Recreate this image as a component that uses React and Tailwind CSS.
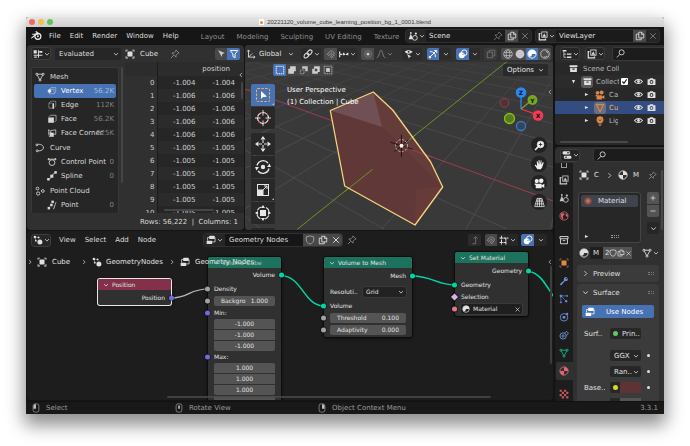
import React from "react";

const ICONS = {
  blender: (
    <g fill="none" stroke="currentColor" strokeWidth="1.7" strokeLinecap="round">
      <path d="M1 11.5 9 5.2M2.5 6.2h7M7.5 2.5l4.2 3.3" />
      <circle cx="10" cy="9.2" r="4.4" />
      <circle cx="10" cy="9.2" r="1.4" fill="currentColor" stroke="none" />
    </g>
  ),
  sheet: <path d="M1 2h5v5H1zM8 2h1.500v12H8zM1 9h14v1.6H1zM10 3h5v3h-5zM2 12h4v2H2z" fill="currentColor" />,
  object: (
    <g fill="currentColor">
      <rect x="4" y="4" width="8" height="8" rx="0.8" />
      <path d="M1 1h3.500v1.300h-2.200v2.200H1zM15 1h-3.500v1.300h2.200v2.200H15zM1 15h3.500v-1.300h-2.200v-2.200H1zM15 15h-3.500v-1.300h2.200v-2.200H15z" />
    </g>
  ),
  pin: (
    <g fill="none" stroke="currentColor" strokeWidth="1.2" strokeLinejoin="round">
      <path d="M9.5 1.5 14.5 6.5 12.5 7 9.8 9.8 9.5 13 3 6.5 6.3 6.2 9 3.5zM6 10 1.5 14.5" />
    </g>
  ),
  cursor: <path d="M2 2 14 7 9.5 8.8 8.5 14z" fill="currentColor" />,
  funnel: (
    <path d="M2 2.5h12L9.7 8v6L6.3 12V8z" fill="none" stroke="currentColor" strokeWidth="1.5" strokeLinejoin="round" />
  ),
  mesh: (
    <g fill="none" stroke="currentColor" strokeWidth="1.4">
      <path d="M3 3.5h10L8 13z" />
      <g fill="#262626">
        <circle cx="3" cy="3.5" r="1.6" />
        <circle cx="13" cy="3.5" r="1.6" />
        <circle cx="8" cy="13" r="1.6" />
      </g>
    </g>
  ),
  vertex: (
    <g fill="none" stroke="currentColor" strokeWidth="1" opacity="0.9">
      <path d="M4 5V12.5h7.5l2.5-2.5V2.5H6.5L4 5h7.5v7.5" opacity="0.6" />
      <circle cx="4" cy="8" r="2.4" fill="currentColor" />
    </g>
  ),
  edge: (
    <g fill="none" stroke="currentColor" strokeWidth="1">
      <path d="M3 5v8h6M3 5l3-3h8v8l-2 2M3 5h5" opacity="0.7" />
      <path d="M10 5v9" strokeWidth="2.6" />
    </g>
  ),
  face: (
    <g>
      <rect x="2" y="5.5" width="9" height="8.5" fill="currentColor" />
      <path d="M3 4.5 5.5 2H14.500v8.500L12 13" fill="none" stroke="currentColor" strokeWidth="1" />
    </g>
  ),
  corner: (
    <g fill="none" stroke="currentColor" strokeWidth="1.2">
      <path d="M3 2v10M6 4l8-1v7H6z" />
      <path d="M3 13.500h8" />
      <rect x="5" y="8" width="5" height="4.500" fill="currentColor" />
      <path d="M2 4h2M2 8h2" />
    </g>
  ),
  curve: (
    <g fill="none" stroke="currentColor" strokeWidth="1.4">
      <path d="M3 2.500C9 1 14 4 13.500 8S8 13 4 12.500" />
      <circle cx="3" cy="3" r="1.500" fill="#262626" />
      <circle cx="3.500" cy="12.500" r="1.500" fill="#262626" />
    </g>
  ),
  control: (
    <g fill="none" stroke="currentColor" strokeWidth="1.4">
      <circle cx="8" cy="9" r="4.600" />
      <path d="M3 3.500h10" />
      <circle cx="2.500" cy="3.500" r="1" fill="currentColor" />
      <circle cx="13.500" cy="3.500" r="1" fill="currentColor" />
    </g>
  ),
  spline: (
    <g fill="none" stroke="currentColor" strokeWidth="1.300">
      <path d="M2 14C7 13 8 4 14 2" />
      <rect x="6" y="6.500" width="3.500" height="3.500" fill="currentColor" />
      <rect x="1" y="12" width="2.500" height="2.500" fill="currentColor" />
      <rect x="12.500" y="1" width="2.500" height="2.500" fill="currentColor" />
    </g>
  ),
  cloud: (
    <g fill="none" stroke="currentColor" strokeWidth="1.400">
      <circle cx="4" cy="4" r="2.200" />
      <circle cx="5" cy="12" r="2.600" />
      <circle cx="12.500" cy="8" r="2.200" />
    </g>
  ),
  point: (
    <g fill="currentColor">
      <rect x="7" y="1" width="4" height="4" />
      <rect x="5" y="6" width="4" height="4" />
      <rect x="1" y="11" width="4" height="4" />
      <path d="M11 15 15 3h-1L10 14z" />
    </g>
  ),
  axes: (
    <g fill="none" stroke="currentColor" strokeWidth="1.400">
      <path d="M4 13V2M4 13h10M4 13l6-6M2 4l2-2.500L6 4M12 11l2.500 2L12 15" />
    </g>
  ),
  link: (
    <g fill="none" stroke="currentColor" strokeWidth="1.700" strokeLinecap="round">
      <ellipse cx="10.500" cy="5.500" rx="4.500" ry="3" transform="rotate(-45 10.500 5.500)" />
      <ellipse cx="5.500" cy="10.500" rx="4.500" ry="3" transform="rotate(-45 5.500 10.500)" />
    </g>
  ),
  magnet: (
    <path
      d="M2 8.500 5.500 4.500C9 1 15 5 12.500 9.500L9.500 14M4.500 10.500 7.500 7c1.500-1 3 0 2.300 1.500L7 12M2 8.500l2.500 2M9.500 14 7 12"
      fill="none"
      stroke="currentColor"
      strokeWidth="1.300"
    />
  ),
  snap: <path d="M1 4v9M1 8.500h13M7.500 6v5M14 6v5" fill="none" stroke="currentColor" strokeWidth="2" strokeDasharray="4 1" />,
  grid: <path d="M4 1v14M11 4v11M1 5h14M1 12h12" fill="none" stroke="currentColor" strokeWidth="1.700" strokeDasharray="5 1" />,
  prop: (
    <g>
      <circle cx="8" cy="8" r="5.500" fill="none" stroke="currentColor" strokeWidth="1" opacity="0.500" />
      <circle cx="8" cy="8" r="2.500" fill="currentColor" />
    </g>
  ),
  bell: <path d="M1 14C6 13 5 2 8 2s2 11 7 12" fill="none" stroke="currentColor" strokeWidth="1.400" />,
  eyeCursor: (
    <g>
      <path d="M1 4.500C4 1 10 1 14 4.500 10 8.500 4 8.500 1 4.500z" fill="currentColor" />
      <circle cx="7.500" cy="4.500" r="1.500" fill="#222" />
      <path d="M5 8l7 4-3 .5L8 15.500z" fill="currentColor" />
    </g>
  ),
  gizmo: (
    <g fill="none" stroke="currentColor" strokeWidth="1.500">
      <path d="M3 4C9 4 12 7 12 13M3 13 13 3M10 2.500h4v4" />
      <circle cx="3" cy="13" r="1.300" fill="currentColor" />
    </g>
  ),
  overlay: (
    <g>
      <circle cx="10" cy="6" r="4.500" fill="none" stroke="currentColor" strokeWidth="1.500" />
      <circle cx="6" cy="10" r="4.800" fill="currentColor" />
      <path d="M7 9.500a4 4 0 0 1 3-2" stroke="#4570b5" fill="none" />
    </g>
  ),
  xray: (
    <g fill="none" stroke="currentColor" strokeWidth="1.300">
      <rect x="2" y="5" width="8.500" height="9" />
      <path d="M5 5V2h9v9h-3.500" />
    </g>
  ),
  wire: (
    <g fill="none" stroke="currentColor" strokeWidth="1.100">
      <circle cx="8" cy="8" r="6.800" />
      <ellipse cx="8" cy="8" rx="3" ry="6.800" />
      <path d="M1.500 5.500h13M1.500 10.500h13" />
    </g>
  ),
  solid: <circle cx="8" cy="8" r="7" fill="currentColor" />,
  material: (
    <g>
      <circle cx="8" cy="8" r="6.600" fill="none" stroke="currentColor" strokeWidth="1.400" />
      <path d="M8 1.400V8h6.600A6.600 6.600 0 0 0 8 1.400zM8 8H1.400A6.600 6.600 0 0 0 8 14.600z" fill="currentColor" />
    </g>
  ),
  shade: (
    <g>
      <circle cx="8" cy="8" r="6.600" fill="none" stroke="currentColor" strokeWidth="1.400" />
      <path d="M8 1.500A6.500 6.500 0 0 0 3 12C6 13 8 11 8 8h6.500A6.500 6.500 0 0 0 8 1.500z" fill="currentColor" />
    </g>
  ),
  rendered: (
    <g fill="none" stroke="currentColor" strokeWidth="1.300">
      <circle cx="8" cy="8" r="6.800" />
      <path d="M9 3.500A4 4 0 0 1 12.500 7M12 11.500a6 6 0 0 1-6 1" />
    </g>
  ),
  selNew: (
    <rect x="2" y="2" width="12" height="12" fill="none" stroke="currentColor" strokeWidth="1.500" strokeDasharray="2.200 1.100" />
  ),
  selAdd: <path d="M5 2h9v8h-3v4H2V6h3z" fill="currentColor" />,
  selSub: (
    <g>
      <path d="M5 2h9v8h-4V6H5z" fill="currentColor" opacity="0.900" />
      <rect x="2" y="8" width="6" height="6" fill="none" stroke="currentColor" strokeDasharray="2 1" />
    </g>
  ),
  selXor: <path d="M5 2h9v9h-3v3H2V6h3zM6 6v4h4V6z" fill="currentColor" fillRule="evenodd" />,
  selAnd: (
    <g>
      <rect x="5" y="5" width="6" height="6" fill="currentColor" />
      <rect x="2" y="2" width="12" height="12" fill="none" stroke="currentColor" strokeWidth="1.200" strokeDasharray="2 1.300" />
    </g>
  ),
  toolSelect: (
    <g>
      <rect x="1.500" y="1.500" width="13" height="13" rx="1" fill="none" stroke="#f0b347" strokeWidth="1" strokeDasharray="2.500 1.300" />
      <path d="M6 4v8l2-2 1.200 0 2.800-.5z" fill="#fff" />
    </g>
  ),
  toolCursor: (
    <g fill="none">
      <circle cx="8" cy="8" r="5.500" stroke="#eee" strokeWidth="1.200" />
      <circle cx="8" cy="8" r="5.500" stroke="#d44" strokeWidth="1.200" strokeDasharray="2 3.760" />
      <path d="M8 0v5.500M8 10.500V16M0 8h5.500M10.500 8H16" stroke="#eee" strokeWidth="0.900" />
    </g>
  ),
  toolMove: (
    <g fill="currentColor">
      <path d="M8 0l2.500 3.500h-5zM8 16l2.500-3.500h-5zM0 8l3.500-2.500v5zM16 8l-3.500-2.500v5z" />
      <path d="M8 4v3M8 9v3M4 8h3M9 8h3" stroke="currentColor" strokeWidth="1.100" />
    </g>
  ),
  toolRotate: (
    <g fill="none" stroke="currentColor" strokeWidth="1.300">
      <path d="M2 6.500A6.300 6.300 0 0 1 13 4M14 9.500A6.300 6.300 0 0 1 3 12" />
      <path d="M12 8l2.500-3.500L16 8zM0 8l1.500 3.500L4 8z" fill="currentColor" stroke="none" />
      <circle cx="8" cy="8" r="2.200" fill="currentColor" stroke="none" />
    </g>
  ),
  toolScale: (
    <g>
      <rect x="2.500" y="2.500" width="11" height="11" fill="none" stroke="currentColor" strokeWidth="1" />
      <rect x="2.500" y="7.500" width="6" height="6" fill="currentColor" />
      <path d="M8 8l4-4M9 4h3v3" stroke="currentColor" fill="none" />
    </g>
  ),
  toolTransform: (
    <g>
      <rect x="5" y="5" width="6" height="6" fill="currentColor" />
      <circle cx="8" cy="8" r="6.300" fill="none" stroke="currentColor" strokeWidth="1.100" strokeDasharray="5 4.900" strokeDashoffset="-2.450" />
      <path d="M8 0l2 3H6zM8 16l2-3H6zM0 8l3-2v4zM16 8l-3-2v4z" fill="currentColor" />
    </g>
  ),
  zoom: (
    <g fill="none" stroke="currentColor">
      <circle cx="9.500" cy="6.500" r="4.800" fill="currentColor" />
      <path d="M6 10l-4.500 4.500" strokeWidth="2.200" />
      <path d="M9.500 4v5M7 6.500h5" stroke="#222" strokeWidth="1.200" />
    </g>
  ),
  hand: (
    <path
      d="M5 15 1 9l1-1 2.500 2L4 3.500l1.300-.3L6.500 8l.2-6.500H8L8.500 8l1.300-6 1.300.3L10.500 8.500 13 4.500l1.200.6L12 12l-2 3z"
      fill="currentColor"
    />
  ),
  movie: (
    <g fill="currentColor">
      <circle cx="4" cy="4.500" r="3" />
      <circle cx="10.500" cy="4" r="3.300" />
      <path d="M2.500 8.500H11v2l4-2v6l-4-2V15H2.500zM1 8h2v2H1z" />
    </g>
  ),
  persp: (
    <path d="M4.500 2h7L15 14H1zM3.500 6h9M2.500 10h11M8 2v12M6 2 4.500 14M10 2l1.500 12" fill="none" stroke="currentColor" strokeWidth="1.100" />
  ),
  scene: (
    <g fill="currentColor">
      <path d="M4.500 4 8 13H1z" />
      <circle cx="11" cy="11" r="3.800" fill="none" stroke="currentColor" strokeWidth="1.400" />
      <circle cx="12.500" cy="4" r="1.800" />
      <circle cx="4.500" cy="3" r="1.500" />
    </g>
  ),
  copy: (
    <g fill="none" stroke="currentColor" strokeWidth="1.400">
      <path d="M6 2h5l3 3v6H6zM10.500 2v3.500H14" />
      <path d="M6 5H2v9h8v-3" />
    </g>
  ),
  close: <path d="M3.500 3.500l9 9M12.500 3.500l-9 9" stroke="currentColor" strokeWidth="1.500" fill="none" />,
  layers: (
    <g fill="none" stroke="currentColor" strokeWidth="1.300">
      <rect x="6" y="1.500" width="8.500" height="8.500" />
      <path d="M4 4H2v10h10v-2" strokeWidth="2" />
      <path d="M7 9l3-5 3 5z" fill="currentColor" stroke="none" />
    </g>
  ),
  tree: (
    <g fill="currentColor">
      <path d="M1 1.500h6v2.500H1zM8 7h7v2.300H8zM8 12h7v2.300H8z" />
      <path d="M3 4v9.200h4M3 8.200h4" fill="none" stroke="currentColor" strokeWidth="1.200" />
    </g>
  ),
  search: (
    <g fill="none" stroke="currentColor" strokeWidth="1.500">
      <circle cx="10" cy="6" r="4.500" />
      <path d="M7 9.500 1.500 15" />
    </g>
  ),
  box: (
    <g>
      <path d="M1 2h14v3.500H1zM2 6.500h12V14H2zM6 8v2h4V8z" fill="currentColor" fillRule="evenodd" />
    </g>
  ),
  archive: (
    <g fill="none" stroke="currentColor" strokeWidth="1.500">
      <path d="M1.500 2.500h13v3.500h-13zM2.500 6v8h11V6M6 9h4" />
    </g>
  ),
  eye: (
    <g>
      <path d="M1 8c3.500-5 10.500-5 14 0-3.500 5-10.500 5-14 0z" fill="none" stroke="currentColor" strokeWidth="1.800" />
      <circle cx="8" cy="8" r="2.500" fill="currentColor" />
    </g>
  ),
  camera: (
    <path
      d="M1 4h3l1.500-2h5L12 4h3v10H1zM8 5.500a3.300 3.300 0 1 0 0 6.600 3.300 3.300 0 0 0 0-6.600zM8 7a1.800 1.800 0 1 1 0 3.600A1.800 1.800 0 0 1 8 7z"
      fill="currentColor"
      fillRule="evenodd"
    />
  ),
  tri: <path d="M2 2.500h12L8 14z" fill="none" stroke="currentColor" strokeWidth="1.800" strokeLinejoin="round" />,
  bulb: (
    <g fill="currentColor">
      <circle cx="8" cy="6" r="5.500" />
      <path d="M5.500 12h5v1.200h-5zM6 14h4v1.500H6z" />
      <path d="M6 5.500 8 8l2-2.500" stroke="#333" fill="none" />
    </g>
  ),
  props: (
    <g>
      <rect x="1" y="2" width="12" height="5" rx="2" fill="currentColor" />
      <rect x="3" y="9" width="12" height="5" rx="2" fill="currentColor" />
      <path d="M8 4.500h4M5 11.500h3" stroke="#222" strokeWidth="1.600" />
    </g>
  ),
  world: (
    <g>
      <circle cx="8" cy="8" r="6.500" fill="none" stroke="currentColor" strokeWidth="1.300" />
      <path d="M3 4l4-1 2 3-3 2 1 3-1 3-3-5zM10 4l4 2v4l-3-2z" fill="currentColor" />
    </g>
  ),
  objTab: (
    <g>
      <rect x="4" y="4" width="8" height="8" fill="currentColor" />
      <path d="M1.500 4V1.500H4M12 1.500h2.500V4M14.500 12v2.500H12M4 14.500H1.500V12" fill="none" stroke="currentColor" strokeWidth="1" />
    </g>
  ),
  wrench: <path d="M2 12.500 8 7C7 3 10 1 13 2l-2.500 2.500 1 1L14 3c1 3-1 6-4.500 5L4 14.500c-1.300 1-3-.8-2-2z" fill="currentColor" />,
  particle: (
    <g fill="currentColor" stroke="currentColor">
      <path d="M3 3l9 0M3 3l0 10M3 3l7 7" fill="none" strokeWidth="1" />
      <circle cx="3" cy="3" r="1.600" />
      <circle cx="13" cy="3" r="1" />
      <circle cx="3" cy="13.500" r="1" />
      <circle cx="11.500" cy="11.500" r="1.500" />
    </g>
  ),
  physics: (
    <g>
      <circle cx="8" cy="8.500" r="6" fill="none" stroke="currentColor" strokeWidth="1.400" />
      <circle cx="8" cy="8.500" r="2.300" fill="currentColor" />
      <circle cx="13" cy="3" r="1.800" fill="currentColor" />
    </g>
  ),
  constraint: (
    <g fill="none" stroke="currentColor" strokeWidth="1.500">
      <circle cx="6.500" cy="9.500" r="5" />
      <circle cx="6.500" cy="9.500" r="1.800" />
      <path d="M9 5l3-3 3 3-3 4" />
    </g>
  ),
  checker: (
    <path
      d="M1 1h3.500v3.500H1zM8 1h3.500v3.500H8zM4.500 4.500H8V8H4.500zM11.500 4.500H15V8h-3.500zM1 8h3.500v3.500H1zM8 8h3.500v3.500H8zM4.500 11.500H8V15H4.500zM11.500 11.500H15V15h-3.500z"
      fill="currentColor"
    />
  ),
  shield: <path d="M8 1.500 14 3v5c0 3-3 5.500-6 6.500-3-1-6-3.500-6-6.500V3z" fill="none" stroke="currentColor" strokeWidth="1.400" />,
  geoNodes: (
    <g fill="currentColor">
      <circle cx="11" cy="11" r="4" />
      <circle cx="3" cy="3" r="2" />
      <circle cx="9" cy="4" r="1.500" />
      <circle cx="4.500" cy="9" r="1.500" />
      <path d="M3 3l6 1M3 3l1.500 6" stroke="currentColor" strokeWidth="0.700" />
    </g>
  ),
  nodeTree: (
    <g fill="currentColor">
      <rect x="5" y="1" width="9" height="5.500" rx="1.500" />
      <rect x="1" y="9" width="9" height="5.500" rx="1.500" />
      <path d="M5 4H2.500v5M14 4h.5v7H10" fill="none" stroke="currentColor" strokeWidth="1.200" />
    </g>
  ),
  up: <path d="M4 14h5V3M5.500 6 9 2.500 12.500 6" fill="none" stroke="currentColor" strokeWidth="1.500" />,
  chev: <path d="M3 5.500 8 11l5-5.500" fill="none" stroke="currentColor" strokeWidth="2" />,
  right: <path d="M5.500 2.500 11 8l-5.500 5.500" fill="none" stroke="currentColor" strokeWidth="1.800" />,
  left: <path d="M10.500 2.500 5 8l5.500 5.500" fill="none" stroke="currentColor" strokeWidth="1.800" />,
  plus: <path d="M8 3v10M3 8h10" stroke="currentColor" strokeWidth="1.500" />,
  minus: <path d="M3 8h10" stroke="currentColor" strokeWidth="1.500" />,
  play: <path d="M3 3l11 5-11 5z" fill="currentColor" />,
  down: <path d="M3 3h10L8 14z" fill="currentColor" />,
};

function Icon({ name, size = "size-[10px]", className = "" }) {
  return (
    <svg viewBox="0 0 16 16" className={`shrink-0 ${size} ${className}`} aria-hidden="true">
      {ICONS[name]}
    </svg>
  );
}

function IconButton({ icon, label, className = "", size = "size-[10px]", menu = false }) {
  return (
    <button type="button" aria-label={label} className={`flex h-3 shrink-0 items-center justify-center ${className}`}>
      {icon && <Icon name={icon} size={size} />}
      {menu && <Icon name="chev" size="size-[6px]" className="ml-px" />}
    </button>
  );
}

const EDITOR_BTN = "h-[13px] rounded-[3px] border border-[#3d3d3d] bg-[#262626] text-[#e0e0e0]";

function Select({ label, options, className = "", selectClass = "" }) {
  return (
    <label className={`relative flex items-center rounded-[2px] ${className}`}>
      <span className="sr-only">{label}</span>
      <select className={`h-full w-full min-w-0 appearance-none bg-transparent outline-none ${selectClass}`}>
        {options.map((o) => (
          <option key={o}>{o}</option>
        ))}
      </select>
      <Icon name="chev" size="size-[6px]" className="pointer-events-none absolute right-[2px]" />
    </label>
  );
}

/* ---------- Top bar ---------- */

function TitleBar() {
  return (
    <div className="flex h-[10px] items-center rounded-t-[2px] bg-linear-to-b from-[#e4e4e4] to-[#cfcfcf] px-[3px]">
      <div className="flex flex-1 gap-[3px]">
        <span className="size-[6px] rounded-full bg-[#ee6a5f]" />
        <span className="size-[6px] rounded-full bg-[#f5bd4f]" />
        <span className="size-[6px] rounded-full bg-[#61c454]" />
      </div>
      <div className="flex items-center gap-[3px] font-['Liberation_Sans',sans-serif] text-[6px] leading-[10px] text-[#3c3c3c]">
        <span className="flex h-[6px] w-[5px] items-center justify-center bg-white">
          <span className="size-[3px] rounded-full bg-[#e8833a]" />
        </span>
        20221120_volume_cube_learning_position_bg_1_0001.blend
      </div>
      <div className="flex-1" />
    </div>
  );
}

function DataBlock({ icon, label, value, pin, className }) {
  return (
    <div className={`flex h-3 items-stretch overflow-hidden rounded-[3px] bg-[#1b1b1b] ring-1 ring-[#303030] ${className}`}>
      <IconButton icon={icon} label={`Browse ${label}`} menu className="w-5 bg-[#262626] text-[#e0e0e0]" />
      <input aria-label={label} defaultValue={value} className="w-0 min-w-0 flex-1 bg-transparent pl-[3px] text-[#e0e0e0] outline-none" />
      {pin && <IconButton icon="pin" label="Pin scene" className="w-[14px] text-[#808080]" />}
      <IconButton icon="copy" label={`New ${label}`} className="w-[13px] bg-[#484848] text-[#d8d8d8]" />
      <IconButton icon="close" label={`Remove ${label}`} className="w-[13px] bg-[#262626] text-[#777]" />
    </div>
  );
}

function TopBar() {
  return (
    <header className="flex h-[17px] items-center bg-[#161616] pr-[5px] pl-[5px]">
      <Icon name="blender" size="size-[11px]" className="text-[#eee]" />
      <nav className="ml-[7px] flex gap-[9px] text-[#dedede]">
        {["File", "Edit", "Render", "Window", "Help"].map((m) => (
          <button key={m} type="button">{m}</button>
        ))}
      </nav>
      <nav className="ml-[22px] flex min-w-0 flex-1 gap-3 pt-[3px] text-[#8f8f8f]">
        {["Layout", "Modeling", "Sculpting", "UV Editing", "Texture"].map((m) => (
          <button key={m} type="button" className="shrink-0 whitespace-nowrap">{m}</button>
        ))}
      </nav>
      <DataBlock icon="scene" label="scene" value="Scene" pin className="w-[125px]" />
      <DataBlock icon="layers" label="view layer" value="ViewLayer" className="ml-[5px] w-[123px]" />
    </header>
  );
}

/* ---------- Spreadsheet ---------- */

const GROUPS = [
  { name: "Mesh", icon: "mesh", items: [
    ["vertex", "Vertex", "56.2K"],
    ["edge", "Edge", "112K"],
    ["face", "Face", "56.2K"],
    ["corner", "Face Corner", "225K"],
  ] },
  { name: "Curve", icon: "curve", items: [
    ["control", "Control Point", "0"],
    ["spline", "Spline", "0"],
  ] },
  { name: "Point Cloud", icon: "cloud", items: [["point", "Point", "0"]] },
];

const POSITIONS = ["-1.004", "-1.006", "-1.006", "-1.006", "-1.006", "-1.005", "-1.005", "-1.005", "-1.005", "-1.005", "-1.005"];

function DomainList() {
  return (
    <div className="h-[146px] w-[88px] shrink-0 overflow-hidden rounded-[2px] border border-b-0 border-[#393939] bg-[#262626] p-[2px] text-[#d8d8d8]">
      {GROUPS.map((g) => (
        <div key={g.name} className="mb-px">
          <div className="flex h-[14px] items-center gap-[5px] px-px">
            <Icon name={g.icon} />
            {g.name}
          </div>
          {g.items.map(([icon, name, count]) => (
            <button
              key={name}
              type="button"
              className={`relative flex h-[14px] w-full items-center gap-[4px] pl-[13px] whitespace-nowrap ${name === "Vertex" ? "rounded-[2px] bg-[#4772b3] text-white" : ""}`}
            >
              <Icon name={icon} />
              {name}
              <span className={`absolute right-[2px] ${name === "Vertex" ? "text-[#a9bbd8]" : "text-[#838383]"}`}>{count}</span>
            </button>
          ))}
        </div>
      ))}
    </div>
  );
}

function Spreadsheet() {
  return (
    <section className="flex w-[217px] shrink-0 flex-col overflow-hidden rounded-[4px] bg-[#303030] text-[#dcdcdc]">
      <div className="flex h-[17px] shrink-0 items-center px-[4px]">
        <IconButton icon="sheet" label="Editor type" menu className={`w-[20px] ${EDITOR_BTN}`} />
        <Select
          label="Object evaluation state"
          options={["Evaluated", "Original", "Viewer Node"]}
          className="ml-1 h-3 w-[66px] bg-[#262626]"
          selectClass="pl-[4px]"
        />
        <Icon name="object" className="ml-[4px]" />
        <span className="ml-[5px] flex-1">Cube</span>
        <IconButton icon="pin" label="Pin" className="mr-[35px] text-[#9a9a9a]" />
        <IconButton icon="cursor" label="Show only selected" className="w-3 rounded-l-[2px] bg-[#484848] text-[#c8c8c8]" size="size-[9px]" />
        <IconButton icon="funnel" label="Filter" className="w-[13px] rounded-r-[2px] bg-[#4772b3] text-white" />
      </div>
      <div className="flex h-[151px] overflow-hidden pl-[4px]">
        <div className="pt-[5px]">
          <DomainList />
        </div>
        <div className="mt-[5px] ml-[2px] h-[116px] w-[2px] rounded-full bg-[#454545]" />
        <div className="relative ml-[2px] min-w-0 flex-1 bg-[#262626]">
          <table className="w-full table-fixed border-collapse text-right text-[#cfcfcf]">
            <thead>
              <tr className="h-[14px] bg-[#2c2c2c]">
                <th className="w-[32px]" />
                <th colSpan={2} className="border-l border-[#1c1c1c] pr-[14px] text-right font-normal">position</th>
              </tr>
            </thead>
            <tbody>
              {POSITIONS.map((p, i) => (
                <tr key={i} className="h-[13px] even:bg-[#2b2b2b]">
                  <td className="bg-[#303030] p-0 pr-[2px]">{i}</td>
                  <td className="border-l border-[#1c1c1c] p-0 pr-[5px]">{p}</td>
                  <td className="p-0 pr-[9px]">{p}</td>
                </tr>
              ))}
            </tbody>
          </table>
          <Icon name="left" size="size-[6px]" className="absolute top-[10px] right-0" />
          <div className="absolute top-[20px] right-px h-[17px] w-[2px] rounded-full bg-[#454545]" />
          <div className="absolute right-[30px] bottom-[2px] h-[2px] w-[50px] rounded-full bg-[#454545]" />
        </div>
      </div>
      <div className="flex h-[17px] items-center justify-end pr-[6px] whitespace-pre">Rows: 56,222  |  Columns: 1</div>
    </section>
  );
}

/* ---------- 3D viewport ---------- */

const HORIZON = -20;
const GREEN_LINES = Array.from({ length: 44 }, (_, i) => 297 + 84.5 * (i - 20)).filter((x) => x !== 297);
const RED_LINES = Array.from({ length: 36 }, (_, i) => 630 + 123 * (i - 22)).filter((x) => x !== 630);

function Scene3D() {
  return (
    <svg viewBox="245 45 308 185" preserveAspectRatio="xMidYMid slice" className="absolute inset-0 size-full" aria-hidden="true">
      <defs>
        <linearGradient id="fog" x1="0" y1="45" x2="0" y2="140" gradientUnits="userSpaceOnUse">
          <stop offset="0.150" stopColor="#393939" stopOpacity="0.700" />
          <stop offset="1" stopColor="#393939" stopOpacity="0" />
        </linearGradient>
      </defs>
      <rect x="0" y="0" width="900" height="400" fill="#393939" />
      <g stroke="#505050" strokeWidth="0.800">
        {GREEN_LINES.map((x) => (
          <line key={x} x1={x} y1="229" x2="609" y2={HORIZON} />
        ))}
        {RED_LINES.map((x) => (
          <line key={x} x1={x} y1="229" x2="-54" y2={HORIZON} />
        ))}
      </g>
      <rect x="0" y="0" width="900" height="140" fill="url(#fog)" />
      <line x1="245" y1="89" x2="553" y2="201" stroke="#a33a4d" strokeWidth="1" />
      <line x1="297" y1="229.500" x2="510" y2="59" stroke="#6a9424" strokeWidth="1" />
      <path d="M373.300 92 330.300 110.500 344.700 186 415 225 442.700 187 430.700 162 392.700 110z" fill="#613838" />
      <path d="M373.300 92 330.300 110.500 382.300 127z" fill="#705055" />
      <path d="M373.300 92 382.300 127 442.700 187 430.700 162 392.700 110z" fill="#643d3b" />
      <path d="M416 189 442.700 187 415 225z" fill="#673c38" />
      <line x1="344.700" y1="191.500" x2="372.700" y2="169.300" stroke="#6a9424" strokeWidth="1" />
      <line x1="407" y1="141.500" x2="416" y2="134.500" stroke="#6a9424" strokeWidth="1" />
      <line x1="409" y1="149" x2="432" y2="157" stroke="#a33a4d" strokeWidth="1" />
      <path
        d="M373.300 92 330.300 110.500 344.700 186 415 225 442.700 187 430.700 162 392.700 110z"
        fill="none"
        stroke="#f5d37c"
        strokeWidth="1.300"
        strokeLinejoin="round"
      />
      <g transform="translate(401.500 145.700)" fill="none">
        <path d="M-11 -3.500 11 3.500M0-11V11M-7 6 7-6" stroke="#1a1010" strokeWidth="0.900" />
        <circle r="6" stroke="#d8b8b8" strokeWidth="0.900" strokeDasharray="2 1.500" />
        <circle r="2" fill="#fff3e0" />
      </g>
      <g strokeWidth="1.300" fontFamily="DejaVu Sans, sans-serif" fontSize="6" fontWeight="bold" textAnchor="middle">
        <path d="M521 109V93" stroke="#2b87f0" />
        <path d="M521 109 532 100" stroke="#77a71c" />
        <path d="M521 109 538 115" stroke="#ee3b52" />
        <circle cx="504.500" cy="103" r="4.300" fill="#4c3338" stroke="#a03a4c" strokeWidth="1" />
        <circle cx="509.500" cy="118.500" r="5" fill="#587a22" stroke="#86c010" />
        <circle cx="521" cy="126" r="4.500" fill="#2f4560" stroke="#3d78bc" />
        <circle cx="532.500" cy="100" r="5" fill="#77a71c" />
        <circle cx="538" cy="115.500" r="5.300" fill="#f33b55" />
        <circle cx="521" cy="92.500" r="5.300" fill="#2b87f0" />
        <text x="521" y="95" fill="#111">Z</text>
        <text x="532.500" y="102.500" fill="#111">Y</text>
        <text x="538" y="118" fill="#111">X</text>
      </g>
    </svg>
  );
}

const MENU_BTN = "rounded-[2px] bg-[#2b2b2b]/80 text-[#e0e0e0]";

function ViewportHeader() {
  return (
    <div className="flex h-[17px] items-center bg-[#303030]/80 pr-[2px] text-[#e0e0e0]">
      <Icon name="axes" className="ml-px" />
      <Select label="Transform orientation" options={["Global", "Local", "Normal"]} className="ml-[2px] h-3 w-[38px]" selectClass="pl-px" />
      <IconButton icon="link" label="Pivot point" menu className={`ml-[5px] w-[20px] ${MENU_BTN}`} />
      <IconButton icon="magnet" label="Snap" className="ml-[3px] w-[13px] rounded-l-[2px] bg-[#4d4d4d] text-[#a0a0a0]" />
      <IconButton icon="snap" label="Snapping" menu className={`w-[20px] ${MENU_BTN}`} />
      <IconButton icon="prop" label="Proportional editing" className="ml-[4px] w-[13px] rounded-l-[2px] bg-[#4d4d4d] text-[#c8c8c8]" />
      <IconButton icon="bell" label="Falloff" menu className="w-[20px] text-[#888]" />
      <IconButton icon="eyeCursor" label="Object visibility" menu className={`ml-auto w-[20px] ${MENU_BTN}`} />
      <IconButton icon="gizmo" label="Gizmos" className="ml-[5px] w-3 rounded-l-[2px] bg-[#4772b3] text-white" />
      <IconButton label="Gizmo options" menu className={`w-[12px] ${MENU_BTN}`} />
      <IconButton icon="overlay" label="Overlays" className="ml-[5px] w-[13px] rounded-l-[2px] bg-[#4772b3] text-white" />
      <IconButton label="Overlay options" menu className={`w-[11px] ${MENU_BTN}`} />
      <IconButton icon="xray" label="Toggle x-ray" className="mr-1 ml-[4px] w-[13px] rounded-[2px] bg-[#3a3a3a] text-[#757575]" />
      <div className="flex overflow-hidden rounded-[2px] bg-[#4d4d4d] text-[#c8c8c8]">
        <IconButton icon="wire" label="Wireframe" className="w-[13px]" />
        <IconButton icon="solid" label="Solid" className="w-3" />
        <IconButton icon="shade" label="Material preview" className="w-3 bg-[#4772b3] text-white" />
        <IconButton icon="rendered" label="Rendered" className="w-[13px]" />
      </div>
    </div>
  );
}

function ToolButton({ icon, label, active, corner }) {
  return (
    <button
      type="button"
      aria-label={label}
      className={`relative flex h-[22px] w-6 items-center justify-center ${active ? "bg-[#4772b3]" : "bg-[#282828]"} text-[#e6e6e6]`}
    >
      <Icon name={icon} size="size-4" />
      {corner && <span className="absolute right-px bottom-px border border-transparent border-r-[#bbb] border-b-[#bbb]" />}
    </button>
  );
}

function Viewport() {
  return (
    <section className="relative flex h-[185px] min-w-0 flex-1 flex-col overflow-hidden rounded-[4px] bg-[#393939]">
      <Scene3D />
      <div className="relative flex flex-1 flex-col">
        <ViewportHeader />
        <div className="flex items-center justify-between py-[2px] pr-[5px] pl-[28px]">
          <div className="flex overflow-hidden rounded-[2px] bg-[#4a4a4a]/70 text-[#cfcfcf]">
            <IconButton icon="selNew" label="Set selection" className="w-[13px] bg-[#4772b3] text-white" />
            <IconButton icon="selAdd" label="Extend selection" className="w-3" />
            <IconButton icon="selSub" label="Subtract selection" className="w-3" />
            <IconButton icon="selXor" label="Invert selection" className="w-3" />
            <IconButton icon="selAnd" label="Intersect selection" className="w-3" />
          </div>
          <button type="button" className="flex h-3 items-center gap-[4px] rounded-[2px] bg-[#2a2a2a] px-[4px] text-[#e6e6e6]">
            Options
            <Icon name="chev" size="size-[6px]" />
          </button>
        </div>
        <div className="flex flex-1 pt-[6px] pl-[6px]">
          <div className="flex h-[146px] flex-col gap-[4px] overflow-hidden">
            <div className="flex shrink-0 flex-col gap-px overflow-hidden rounded-[2px]">
              <ToolButton icon="toolSelect" label="Select box" active corner />
              <ToolButton icon="toolCursor" label="Cursor" />
            </div>
            <div className="flex shrink-0 flex-col gap-px overflow-hidden rounded-[2px]">
              <ToolButton icon="toolMove" label="Move" />
              <ToolButton icon="toolRotate" label="Rotate" />
              <ToolButton icon="toolScale" label="Scale" corner />
              <ToolButton icon="toolTransform" label="Transform" />
            </div>
            <div className="h-[22px] w-6 shrink-0 rounded-t-[2px] bg-[#282828]" />
          </div>
          <div className="ml-3 flex-1 leading-[12px] text-white">
            <p>User Perspective</p>
            <p>(1) Collection | Cube</p>
          </div>
          <div className="flex flex-col gap-[3px] pt-[53px] pr-[6px]">
            {[["zoom", "Zoom"], ["hand", "Pan"], ["movie", "Camera view"], ["persp", "Perspective"]].map(([i, l]) => (
              <button key={i} type="button" aria-label={l} className="flex size-4 items-center justify-center rounded-full bg-[#222] text-[#eee]">
                <Icon name={i} size="size-[11px]" />
              </button>
            ))}
          </div>
        </div>
      </div>
      <Icon name="left" size="size-[6px]" className="absolute top-[44px] right-0 text-[#ccc]" />
    </section>
  );
}

/* ---------- Node editor ---------- */

function Socket({ color, side = "left", shape = "rounded-full" }) {
  return (
    <span
      className={`absolute top-1/2 z-10 size-[5px] -translate-y-1/2 ring-1 ring-black/30 ${shape} ${color} ${side === "left" ? "-left-[9px]" : "-right-[9px]"}`}
    />
  );
}

function NodeRow({ children, align = "", socket, side, shape, className = "h-3" }) {
  return (
    <div className={`relative flex items-center ${align} ${className}`}>
      {socket && <Socket color={socket} side={side} shape={shape} />}
      {children}
    </div>
  );
}

function NumberField({ label, value }) {
  return (
    <label className="flex h-[10px] w-full items-center overflow-hidden rounded-[2px] bg-[#545454] px-[7px]">
      <span className="shrink-0">{label}</span>
      <input defaultValue={value} className="w-0 min-w-0 flex-1 bg-transparent text-right outline-none" />
    </label>
  );
}

function Vector({ name, values }) {
  return (
    <div className="flex flex-col gap-px overflow-hidden rounded-[2px]">
      {values.map((v, i) => (
        <label key={i} className="flex h-[10px] bg-[#545454]">
          <span className="sr-only">{`${name} ${"XYZ"[i]}`}</span>
          <input defaultValue={v} className="w-full min-w-0 bg-transparent text-center outline-none" />
        </label>
      ))}
    </div>
  );
}

function Node({ title, color, className, children, frame = "ring-1 ring-black/40", dim = false }) {
  return (
    <div className={`absolute rounded-[2px] bg-[#303030] text-[6px] leading-[10px] text-[#e2e2e2] shadow-[0_1px_4px_rgba(0,0,0,0.6)] ${frame} ${className}`}>
      <div className={`flex h-[11px] items-center gap-[3px] rounded-t-[2px] px-[5px] ${color} ${dim ? "text-white/60" : ""}`}>
        <Icon name="chev" size="size-[6px]" />
        {title}
      </div>
      <div className="px-[6px]">{children}</div>
    </div>
  );
}

const GEO = "bg-[#00d6a3]";
const GRAY = "bg-[#a1a1a1]";
const VEC = "bg-[#6c6ce0]";

function NodeCanvas() {
  return (
    <div className="relative h-[151px] overflow-hidden bg-[#1d1d1d] bg-[radial-gradient(#282828_0.5px,transparent_1px)] bg-[size:11px_11px]">
      <svg viewBox="27 249 526 151" className="pointer-events-none absolute top-0 left-0 h-[151px] w-[526px]" fill="none" aria-hidden="true">
        <path d="M171 298C189 298 189 289 208 289" stroke="#b9b9c4" strokeWidth="1.200" />
        <g stroke="#00d6a3" strokeWidth="1.500">
          <path d="M281 275.500C302 276 304 306 324 306" />
          <path d="M412 276C433 276 436 285 455 285" />
          <path d="M528 271.500C541 272 547 288 556 300" />
        </g>
      </svg>

      <Node title="Position" color="bg-[#83314a]" frame="ring-1 ring-[#e8e8e8]" className="top-[30px] left-[71px] h-[26px] w-[73px]">
        <NodeRow align="justify-end" socket={VEC} side="right" className="mt-[2px] h-3">Position</NodeRow>
      </Node>

      <Node title="Volume Cube" color="bg-[#1d725e]" dim className="top-[8px] left-[181px] h-[160px] w-[73px]">
        <NodeRow align="justify-end" socket={GEO} side="right" className="mt-px h-3">Volume</NodeRow>
        <NodeRow socket={GRAY} className="mt-[2px] h-3">Density</NodeRow>
        <NodeRow socket={GRAY}><NumberField label="Backgro" value="1.000" /></NodeRow>
        <NodeRow socket={VEC}>Min:</NodeRow>
        <Vector name="Min" values={["-1.000", "-1.000", "-1.000"]} />
        <NodeRow socket={VEC}>Max:</NodeRow>
        <Vector name="Max" values={["1.000", "1.000", "1.000"]} />
        <div className="mt-px h-[10px] bg-[#545454]" />
      </Node>

      <Node title="Volume to Mesh" color="bg-[#1d725e]" className="top-[8px] left-[297px] h-[80px] w-[88px]">
        <NodeRow align="justify-end" socket={GEO} side="right" className="mt-[2px] h-3">Mesh</NodeRow>
        <NodeRow align="justify-between" className="mt-1 h-3">
          <span>Resoluti..</span>
          <Select
            label="Resolution mode"
            options={["Grid", "Amount", "Size"]}
            className="h-[10px] w-[43px] bg-[#222] ring-1 ring-[#3a3a3a]"
            selectClass="pl-[3px]"
          />
        </NodeRow>
        <NodeRow socket={GEO} className="mt-[2px] h-3">Volume</NodeRow>
        <NodeRow socket={GRAY}><NumberField label="Threshold" value="0.100" /></NodeRow>
        <NodeRow socket={GRAY}><NumberField label="Adaptivity" value="0.000" /></NodeRow>
      </Node>

      <Node title="Set Material" color="bg-[#1d725e]" className="top-[3px] left-[428px] h-[64px] w-[73px]">
        <NodeRow align="justify-end" socket={GEO} side="right" className="mt-[2px] h-3">Geometry</NodeRow>
        <NodeRow socket={GEO} className="mt-[2px] h-3">Geometry</NodeRow>
        <NodeRow socket="bg-[#d9b0e8]" shape="rotate-45">Selection</NodeRow>
        <NodeRow socket="bg-[#eb7582]">
          <div className="flex h-[10px] w-full items-center gap-[3px] rounded-[2px] bg-[#1f1f1f] px-px ring-1 ring-[#3a3a3a]">
            <Icon name="shade" size="size-2" />
            <input aria-label="Material" defaultValue="Material" className="w-0 min-w-0 flex-1 bg-transparent outline-none" />
            <IconButton icon="close" label="Clear material" size="size-[7px]" className="w-2" />
          </div>
        </NodeRow>
      </Node>

      <div className="absolute top-[7px] left-0 flex items-center whitespace-nowrap text-[#e0e0e0]">
        <Icon name="right" size="size-[6px]" />
        <Icon name="object" className="ml-[4px]" />
        <span className="ml-[5px] w-[29px]">Cube</span>
        <Icon name="right" size="size-[6px]" />
        <Icon name="geoNodes" className="ml-[5px]" />
        <span className="ml-[4px] w-[63px]">GeometryNodes</span>
        <Icon name="right" size="size-[6px]" />
        <Icon name="nodeTree" className="ml-[5px]" />
        <span className="ml-[5px]">Geometry Nodes</span>
      </div>
      <Icon name="left" size="size-[6px]" className="absolute top-[10px] right-0 text-[#ccc]" />
      <div className="absolute top-[17px] right-px h-[98px] w-[2px] rounded-full bg-[#3d3d3d]" />
      <div className="absolute right-[62px] bottom-[2px] left-[140px] h-[2px] rounded-full bg-[#4a4a4a]/80" />
    </div>
  );
}

function NodeEditor() {
  return (
    <section className="overflow-hidden rounded-[4px] bg-[#1d1d1d]">
      <div className="flex h-[18px] items-center pr-[6px] pl-[4px] text-[#dedede]">
        <IconButton icon="geoNodes" label="Editor type" menu className={`w-5 ${EDITOR_BTN}`} />
        <nav className="ml-2 flex w-[145px] gap-[9px]">
          {["View", "Select", "Add", "Node"].map((m) => (
            <button key={m} type="button">{m}</button>
          ))}
        </nav>
        <div className="flex h-3 w-[138px] overflow-hidden rounded-[3px] bg-[#161616] ring-1 ring-[#303030]">
          <IconButton icon="nodeTree" label="Browse node tree" menu className="w-[21px] bg-[#262626]" />
          <input aria-label="Node tree" defaultValue="Geometry Nodes" className="w-0 min-w-0 flex-1 bg-transparent pl-1 outline-none" />
          <IconButton icon="shield" label="Fake user" className="w-[13px] bg-[#484848] text-[#a8a8a8]" />
          <IconButton icon="copy" label="New node tree" className="w-[13px] bg-[#484848]" />
          <IconButton icon="close" label="Unlink" className="w-[13px] bg-[#484848]" />
        </div>
        <IconButton icon="pin" label="Pin" className="ml-[5px] text-[#9a9a9a]" />
        <IconButton icon="up" label="Parent node tree" className="ml-auto w-[13px] rounded-[2px] bg-[#2b2b2b] text-[#6e6e6e]" />
        <IconButton icon="magnet" label="Snap" className="ml-1 w-3 rounded-l-[2px] bg-[#484848] text-[#9a9a9a]" />
        <IconButton icon="grid" label="Snap mode" menu className="w-[21px] bg-[#262626]" />
        <IconButton icon="overlay" label="Overlays" className="ml-[3px] w-[13px] rounded-l-[2px] bg-[#4772b3] text-white" />
        <IconButton label="Overlay options" menu className="w-[13px] rounded-r-[2px] bg-[#262626]" />
      </div>
      <NodeCanvas />
    </section>
  );
}

/* ---------- Outliner ---------- */

function SearchField({ label, className }) {
  return (
    <label className={`flex h-3 items-center rounded-l-[2px] bg-[#1c1c1c] pl-[3px] ring-1 ring-[#383838] ${className}`}>
      <Icon name="search" size="size-[9px]" />
      <input type="text" aria-label={label} className="w-0 min-w-0 flex-1 bg-transparent outline-none" />
    </label>
  );
}

function OutlinerObject({ icon, name, active }) {
  return (
    <li className={`flex h-[13px] items-center pr-[8px] pl-[29px] ${active ? "bg-[#334d80]" : ""}`}>
      <Icon name="play" size="size-[5px]" />
      <span className={`ml-[5px] flex size-3 items-center justify-center rounded-[3px] text-[#d9864a] ${active ? "bg-[#6b6f7d]" : ""}`}>
        <Icon name={icon} />
      </span>
      <span className={`ml-[3px] w-[9px] overflow-hidden whitespace-nowrap ${active ? "text-[#ffaf4f]" : "text-[#b8b8b8]"}`}>{name}</span>
      <Icon name="eye" size="size-[9px]" className="ml-auto" />
      <Icon name="camera" size="size-[9px]" className="ml-[4px]" />
    </li>
  );
}

function Outliner() {
  return (
    <section className="h-[100px] overflow-hidden rounded-l-[4px] bg-[#282828] text-[#e0e0e0]">
      <div className="flex h-[17px] items-center bg-[#2c2c2c] pl-[5px]">
        <IconButton icon="tree" label="Editor type" menu className={`w-[20px] ${EDITOR_BTN}`} />
        <IconButton icon="layers" label="Display mode" menu className={`ml-[5px] w-[20px] ${EDITOR_BTN}`} />
        <SearchField label="Search outliner" className="ml-[8px] flex-1" />
      </div>
      <ul>
        <li className="flex h-[13px] items-center overflow-hidden pl-[14px]">
          <Icon name="box" size="size-[9px]" />
          <span className="ml-[5px] w-[36px] overflow-hidden whitespace-nowrap text-[#b8b8b8]">Scene Coll</span>
        </li>
        <li className="flex h-[13px] items-center bg-[#2b2b2b] pr-[8px] pl-[16px]">
          <Icon name="down" size="size-[5px]" />
          <span className="ml-[5px] flex size-3 items-center justify-center rounded-[3px] bg-[#5a5a5a]">
            <Icon name="box" size="size-[9px]" />
          </span>
          <span className="ml-[3px] w-[23px] overflow-hidden whitespace-nowrap text-[#b8b8b8]">Collect</span>
          <label className="relative ml-[2px] flex size-[7px] items-center justify-center rounded-[1px] bg-white text-[#222]">
            <input type="checkbox" defaultChecked aria-label="Exclude from view layer" className="absolute inset-0 size-full appearance-none" />
            <svg viewBox="0 0 8 8" className="size-[7px]" aria-hidden="true">
              <path d="M1.500 4 3.300 6 6.500 1.500" fill="none" stroke="currentColor" strokeWidth="1.300" />
            </svg>
          </label>
          <Icon name="eye" size="size-[9px]" className="ml-auto" />
          <Icon name="camera" size="size-[9px]" className="ml-[4px]" />
        </li>
        <OutlinerObject icon="movie" name="Ca" />
        <OutlinerObject icon="tri" name="Cu" active />
        <OutlinerObject icon="bulb" name="Lig" />
      </ul>
      <div className="mt-[14px] ml-[5px] h-[2px] w-[68px] rounded-full bg-[#484848]" />
    </section>
  );
}

/* ---------- Properties ---------- */

const TABS = [
  ["layers", "View layer", "text-[#c8c8c8]", ""],
  ["scene", "Scene", "text-[#c8c8c8]", ""],
  ["world", "World", "text-[#d4606c]", ""],
  ["archive", "Collection", "text-[#dcdcdc]", "mt-[6px]"],
  ["objTab", "Object", "text-[#dd8a45]", "mt-[5px]"],
  ["wrench", "Modifiers", "text-[#6a93dc]", ""],
  ["particle", "Particles", "text-[#6a93dc]", ""],
  ["physics", "Physics", "text-[#6a93dc]", ""],
  ["constraint", "Constraints", "text-[#6a93dc]", ""],
  ["mesh", "Data", "text-[#18b688]", ""],
  ["material", "Material", "text-[#e06670]", ""],
  ["checker", "Texture", "text-[#c45560]", "mt-[5px]"],
];

function PropRow({ label, children }) {
  return (
    <div className="flex h-[11px] items-center">
      <span className="w-[26px] shrink-0 whitespace-nowrap">{label}</span>
      {children}
    </div>
  );
}

function KeyDot() {
  return <span className="ml-[6px] size-[3px] shrink-0 rounded-full bg-[#e0e0e0]" />;
}

function Properties() {
  return (
    <section className="flex h-[254px] flex-col overflow-hidden rounded-l-[4px] bg-[#303030] text-[#e0e0e0]">
      <div className="flex h-4 shrink-0 items-center pl-[5px]">
        <IconButton icon="props" label="Editor type" menu className={`w-5 ${EDITOR_BTN}`} />
        <SearchField label="Search properties" className="ml-[14px] flex-1" />
      </div>
      <div className="flex min-h-0 flex-1">
        <div className="flex w-[18px] shrink-0 flex-col items-center overflow-hidden bg-[#1d1d1d]">
          <span className="mb-[3px] h-[5px] w-[6px] shrink-0 border border-t-0 border-[#999]" />
          {TABS.map(([icon, label, color, gap]) => (
            <button
              key={label}
              type="button"
              aria-label={label}
              className={`flex h-[18px] w-[17px] shrink-0 items-center justify-center ${color} ${gap} ${label === "Material" ? "rounded-l-[2px] bg-[#303030]" : ""}`}
            >
              <Icon name={icon} />
            </button>
          ))}
        </div>
        <div className="flex min-w-0 flex-1 flex-col gap-[2px] overflow-hidden pl-1">
          <div className="flex h-6 shrink-0 items-center pr-[7px] pl-[2px]">
            <Icon name="object" />
            <span className="ml-[5px] w-[12px]">C</span>
            <Icon name="right" size="size-[7px]" />
            <Icon name="material" className="ml-[5px]" />
            <span className="ml-[5px] flex-1">M</span>
            <Icon name="pin" size="size-[9px]" className="text-[#999]" />
          </div>
          <div className="mt-[3px] flex shrink-0 justify-between pr-[5px] pl-px">
            <div className="flex h-[51px] w-[63px] flex-col justify-between rounded-[3px] border border-[#454545] bg-[#272727] p-[2px]">
              <button type="button" className="flex h-3 items-center gap-[6px] rounded-[2px] bg-[#3f434c] pl-[3px]">
                <span className="size-2 rounded-full bg-radial from-[#c98278] to-[#4a2320]" />
                Material
              </button>
              <div className="flex h-[8px] items-center pl-[3px]">
                <Icon name="play" size="size-[5px]" />
                <span className="ml-[22px] h-[3px] w-[8px] border-y border-dotted border-[#999]" />
              </div>
            </div>
            <div className="flex flex-col">
              <IconButton icon="plus" label="Add slot" className="mb-px w-3 rounded-t-[2px] bg-[#545454]" size="size-2" />
              <IconButton icon="minus" label="Remove slot" className="mb-[5px] w-3 rounded-b-[2px] bg-[#545454]" size="size-2" />
              <IconButton icon="chev" label="Slot menu" className="w-3 rounded-[2px] bg-[#262626]" size="size-[7px]" />
            </div>
          </div>
          <div className="mt-[2px] flex h-3 shrink-0 items-center pr-[5px] pl-[2px]">
            <Icon name="shade" />
            <input aria-label="Material name" defaultValue="M" className="ml-px w-[13px] min-w-0 bg-[#1f1f1f] pl-[3px] outline-none" />
            <div className="flex h-3 items-center overflow-hidden bg-[#545454] pl-[2px]">
              <span>2</span>
              <Icon name="shield" size="size-[8px]" />
              <Icon name="copy" size="size-[8px]" />
              <Icon name="close" size="size-[7px]" />
            </div>
            <IconButton icon="mesh" label="Link to" menu className="ml-auto w-[18px]" />
          </div>
          <button type="button" className="mt-[4px] mr-[5px] flex h-[17px] shrink-0 items-center gap-[4px] rounded-[3px] bg-[#3b3b3b] px-[5px]">
            <Icon name="right" size="size-[7px]" />
            Preview
            <span className="ml-auto h-[3px] w-[6px] border-y border-dotted border-[#777]" />
          </button>
          <div className="mr-[5px] flex-1 rounded-t-[3px] bg-[#3b3b3b] px-[5px]">
            <button type="button" className="flex h-[17px] w-full items-center gap-[4px]">
              <Icon name="chev" size="size-[7px]" />
              Surface
              <span className="ml-auto h-[3px] w-[6px] border-y border-dotted border-[#777]" />
            </button>
            <button type="button" className="mt-[4px] flex h-[13px] w-full items-center rounded-[2px] bg-[#4772b3] pl-[3px] text-white">
              <Icon name="nodeTree" />
              <span className="flex-1 text-center">Use Nodes</span>
            </button>
            <div className="mt-[10px] pl-[2px]">
              <PropRow label="Surf..">
                <button type="button" className="flex h-[11px] w-[31px] items-center gap-[4px] rounded-[2px] bg-[#272727] pl-[3px]">
                  <span className="size-[5px] shrink-0 rounded-full bg-[#63c763]" />
                  Prin..
                </button>
              </PropRow>
              <div className="mt-[11px] flex flex-col gap-[5px]">
                <PropRow>
                  <Select label="Distribution" options={["GGX"]} className="h-[11px] w-[31px] bg-[#272727]" selectClass="pl-[4px]" />
                  <KeyDot />
                </PropRow>
                <PropRow>
                  <Select label="Subsurface method" options={["Ran.."]} className="h-[11px] w-[31px] bg-[#272727]" selectClass="pl-[4px]" />
                  <KeyDot />
                </PropRow>
                <PropRow label="Base..">
                  <button type="button" aria-label="Base color" className="flex h-[11px] w-[31px] items-center rounded-[2px] bg-[#272727] pl-[3px]">
                    <span className="size-[5px] rounded-full bg-[#d8d82a]" />
                    <span className="ml-[2px] h-full flex-1 bg-[#5f3333]" />
                  </button>
                  <KeyDot />
                </PropRow>
                <div className="ml-[26px] h-[11px] w-[31px] bg-[#272727] pl-[10px]">
                  <div className="h-full bg-[#545454]" />
                </div>
              </div>
            </div>
          </div>
        </div>
        <div className="mt-[7px] mr-px -ml-[3px] h-[60px] w-[2px] rounded-full bg-[#484848]" />
      </div>
    </section>
  );
}

/* ---------- Status bar ---------- */

function Mouse({ button }) {
  const fill = {
    left: "M1.500 3.500a2 2 0 0 1 2-2H4.500V7h-3z",
    middle: "M3.500 3h2v4h-2z",
    right: "M4.500 1.500h1a2 2 0 0 1 2 2V7h-3z",
  };
  return (
    <svg viewBox="0 0 9 12" className="h-[10px] w-2 shrink-0" aria-hidden="true">
      <rect x="1" y="1" width="7" height="10" rx="2.500" fill="none" stroke="#8a8a8a" strokeWidth="1" />
      <path d={fill[button]} fill="#bdbdbd" />
    </svg>
  );
}

function StatusBar() {
  return (
    <footer className="flex h-[13px] items-center border-t border-[#111] bg-[#181818] pr-[6px] pl-[6px] text-[#9a9a9a]">
      {[["left", "Select"], ["middle", "Rotate View"], ["right", "Object Context Menu"]].map(([b, t]) => (
        <div key={t} className="flex w-[143px] items-center gap-[6px] whitespace-nowrap">
          <Mouse button={b} />
          {t}
        </div>
      ))}
      <span className="ml-auto">3.3.1</span>
    </footer>
  );
}

export default function App() {
  return (
    <main className="min-h-screen overflow-hidden bg-white px-[26px] pt-[17px] pb-[33px] font-['DejaVu_Sans',sans-serif] text-[7px] leading-[12px]">
      <div className="rounded-[2px] bg-[#111] shadow-[0_9px_18px_2px_rgba(0,0,0,0.45)]">
        <TitleBar />
        <TopBar />
        <div className="flex gap-[2px] bg-[#141414] pt-px pl-px">
          <div className="flex min-w-0 flex-1 flex-col gap-px">
            <div className="flex gap-px">
              <Spreadsheet />
              <Viewport />
            </div>
            <NodeEditor />
          </div>
          <div className="flex w-[109px] shrink-0 flex-col gap-[2px]">
            <Outliner />
            <Properties />
          </div>
        </div>
        <StatusBar />
      </div>
    </main>
  );
}
